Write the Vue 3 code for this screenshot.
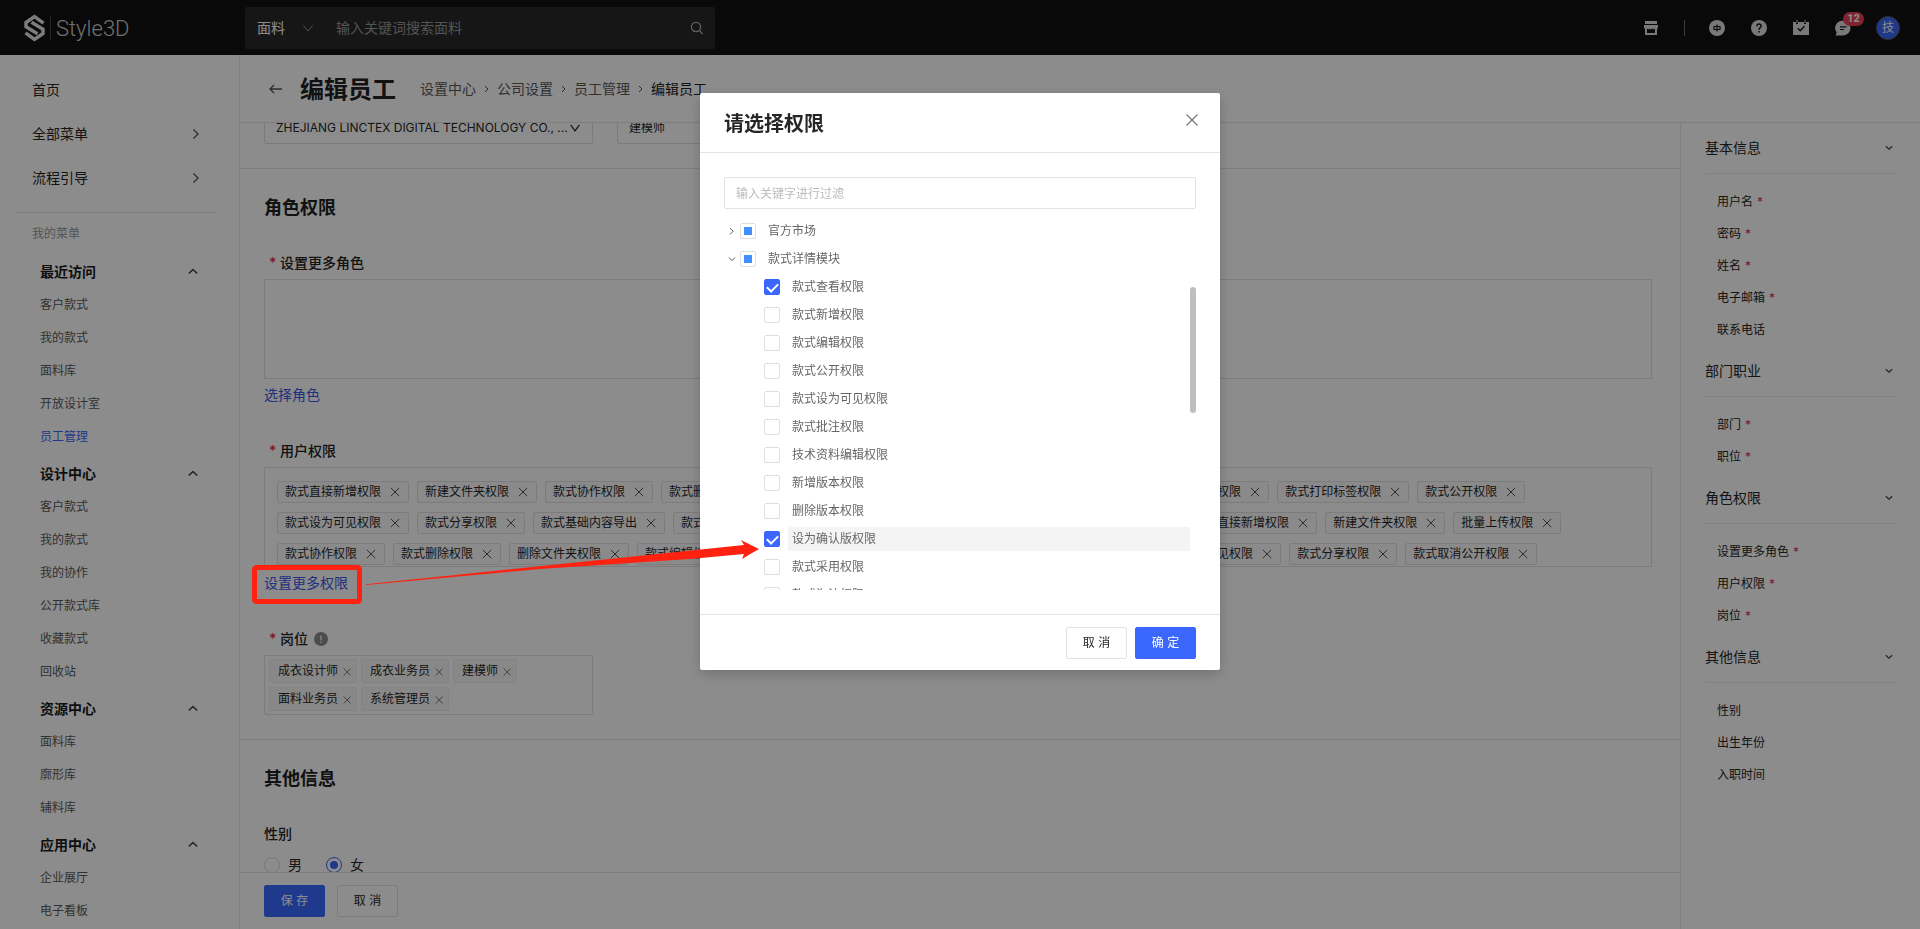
<script setup>
import { ref } from 'vue'

const keyword = ref('')
const filter = ref('')
const gender = ref('女')

const menuGroups = [
  { title: '最近访问', items: ['客户款式', '我的款式', '面料库', '开放设计室', '员工管理'], active: 4 },
  { title: '设计中心', items: ['客户款式', '我的款式', '我的协作', '公开款式库', '收藏款式', '回收站'] },
  { title: '资源中心', items: ['面料库', '廓形库', '辅料库'] },
  { title: '应用中心', items: ['企业展厅', '电子看板'] },
]

const crumbs = ['设置中心', '公司设置', '员工管理', '编辑员工']

const userTags = [
  '款式直接新增权限', '新建文件夹权限', '款式协作权限', '款式删除权限', '删除文件夹权限', '款式编辑权限',
  '款式导出权限', '款式批量上传权限', '款式打印标签权限', '款式公开权限',
  '款式设为可见权限', '款式分享权限', '款式基础内容导出', '款式打印权限', '款式批量导出权限', '款式采用权限',
  '款式取消采用权限', '款式直接新增权限', '新建文件夹权限', '批量上传权限',
  '款式协作权限', '款式删除权限', '删除文件夹权限', '款式编辑权限', '款式导出权限', '款式打印标签权限',
  '款式取消分享权限', '款式设为可见权限', '款式分享权限', '款式取消公开权限',
]

const posts = ['成衣设计师', '成衣业务员', '建模师', '面料业务员', '系统管理员']

const anchors = [
  { title: '基本信息', items: [['用户名', true], ['密码', true], ['姓名', true], ['电子邮箱', true], ['联系电话', false]] },
  { title: '部门职业', items: [['部门', true], ['职位', true]] },
  { title: '角色权限', items: [['设置更多角色', true], ['用户权限', true], ['岗位', true]] },
  { title: '其他信息', items: [['性别', false], ['出生年份', false], ['入职时间', false]] },
]

const tree = ref([
  { label: '款式查看权限', checked: true },
  { label: '款式新增权限', checked: false },
  { label: '款式编辑权限', checked: false },
  { label: '款式公开权限', checked: false },
  { label: '款式设为可见权限', checked: false },
  { label: '款式批注权限', checked: false },
  { label: '技术资料编辑权限', checked: false },
  { label: '新增版本权限', checked: false },
  { label: '删除版本权限', checked: false },
  { label: '设为确认版权限', checked: true, hover: true },
  { label: '款式采用权限', checked: false },
  { label: '款式淘汰权限', checked: false },
])
</script>

<template>
  <div class="page">
    <header class="topbar">
      <a class="logo" href="#" aria-label="Style3D">
        <svg width="21" height="28" viewBox="0 0 21 28" fill="none" stroke="#e4e4e4" stroke-width="3.400">
          <path d="M19.500 9.200 10.500 2.600 2 8.500v4.200l11.500 7" />
          <path d="M1.500 18.800l9 6.600L19 19.500v-4.200l-11.500-7" />
        </svg>
        <span class="logo-line"></span>
        <span class="logo-text">Style3D</span>
      </a>
      <div class="search">
        <div class="search-type">
          <select aria-label="搜索类型"><option>面料</option></select>
          <svg width="10" height="7" viewBox="0 0 10 7" fill="none" stroke="#999"><path d="M.5.5 5 6 9.500.5" /></svg>
        </div>
        <input v-model="keyword" type="text" placeholder="输入关键词搜索面料" aria-label="搜索" />
        <button class="icon-btn" aria-label="搜索">
          <svg width="14" height="14" viewBox="0 0 14 14" fill="none" stroke="#b0b0b0" stroke-width="1.300"><circle cx="7" cy="6" r="4.600" /><path d="m10.300 9.300 3.200 3.700" /></svg>
        </button>
      </div>
      <nav class="tools">
        <button class="icon-btn" aria-label="商店">
          <svg width="16" height="16" viewBox="0 0 16 16" fill="#dcdcdc"><path d="M3 1h12v3H3zM2 5h14v2.500L15 9v6H3V9L2 7.500zM5 8.500V13h8V8.500l-1.300 1-1.400-1-1.300 1-1.300-1-1.400 1z" fill-rule="evenodd" /></svg>
        </button>
        <span class="tool-line"></span>
        <button class="icon-btn" aria-label="语言">
          <svg width="16" height="16" viewBox="0 0 16 16"><circle cx="8" cy="8" r="8" fill="#dcdcdc" /><path d="M5 6.500h6v3H5zM8 4.500v7" fill="none" stroke="#121212" stroke-width="1.200" /></svg>
        </button>
        <button class="icon-btn" aria-label="帮助">
          <svg width="16" height="16" viewBox="0 0 16 16"><circle cx="8" cy="8" r="8" fill="#dcdcdc" /><path d="M5.800 6.200c0-3 4.500-2.800 4.400-.1C10.200 7.600 8 7.800 8 9.700M8 11v1.500" fill="none" stroke="#121212" stroke-width="1.500" /></svg>
        </button>
        <button class="icon-btn" aria-label="日程">
          <svg width="16" height="16" viewBox="0 0 16 16"><path d="M0 2h3v2h2V2h6v2h2V2h3v13H0z" fill="#dcdcdc" /><path d="M4 0v3M12 0v3" stroke="#dcdcdc" /><path d="m4.800 8.300 2.400 2.400 4.200-4.400" fill="none" stroke="#121212" stroke-width="1.500" /></svg>
        </button>
        <button class="icon-btn msg" aria-label="消息">
          <svg width="16" height="16" viewBox="0 0 16 16"><path d="M8.200.8a7.300 7.300 0 1 1 0 14.600H.6l1-3A7.300 7.300 0 0 1 8.200.8z" fill="#dcdcdc" /><path d="M5 6.800h6.500M5 9.500h4" stroke="#121212" stroke-width="1.200" /></svg>
          <span class="badge">12</span>
        </button>
        <button class="avatar">技</button>
      </nav>
    </header>

    <div class="body">
      <aside class="side">
        <a class="side-main" href="#">首页</a>
        <a class="side-main" href="#">全部菜单
          <svg width="8" height="12" viewBox="0 0 8 12" fill="none" stroke="#555" stroke-width="1.300"><path d="m1.500 1.500 4.500 4.500-4.500 4.500" /></svg>
        </a>
        <a class="side-main" href="#">流程引导
          <svg width="8" height="12" viewBox="0 0 8 12" fill="none" stroke="#555" stroke-width="1.300"><path d="m1.500 1.500 4.500 4.500-4.500 4.500" /></svg>
        </a>
        <p class="side-note">我的菜单</p>
        <section v-for="g in menuGroups" :key="g.title" class="side-group">
          <h3>{{ g.title }}
            <svg width="10" height="7" viewBox="0 0 10 7" fill="none" stroke="#444" stroke-width="1.600"><path d="m.8 5.500 4.200-4 4.200 4" /></svg>
          </h3>
          <a v-for="(t, i) in g.items" :key="t" href="#" :class="{ active: g.active === i }">{{ t }}</a>
        </section>
      </aside>

      <div class="work">
        <div class="titlebar">
          <button class="icon-btn" aria-label="返回">
            <svg width="14" height="12" viewBox="0 0 14 12" fill="none" stroke="#555" stroke-width="1.300"><path d="M14 6H2M6 2 2 6l4 4" /></svg>
          </button>
          <h1>编辑员工</h1>
          <nav class="crumbs">
            <template v-for="(c, i) in crumbs" :key="c">
              <svg v-if="i" width="21" height="8" viewBox="0 0 21 8" fill="none" stroke="#555"><path d="m9 1 3 3-3 3" /></svg>
              <a href="#" :class="{ current: i === 3 }">{{ c }}</a>
            </template>
          </nav>
        </div>

        <div class="columns">
          <main class="form-col">
            <div class="scroll">
              <section class="block selects">
                <div class="select-box">
                  <select aria-label="部门"><option>ZHEJIANG LINCTEX DIGITAL TECHNOLOGY CO., ...</option></select>
                  <svg width="10" height="8" viewBox="0 0 10 8" fill="none" stroke="#333" stroke-width="1.300"><path d="m.6.8 4.400 6 4.400-6" /></svg>
                </div>
                <div class="select-box">
                  <select aria-label="职位"><option>建模师</option></select>
                  <svg width="10" height="8" viewBox="0 0 10 8" fill="none" stroke="#333" stroke-width="1.300"><path d="m.6.8 4.400 6 4.400-6" /></svg>
                </div>
              </section>

              <section class="block">
                <h2>角色权限</h2>
                <div class="field">
                  <div class="label"><i>*</i>设置更多角色</div>
                  <div class="box"></div>
                  <a class="link" href="#">选择角色</a>
                </div>
                <div class="field">
                  <div class="label"><i>*</i>用户权限</div>
                  <div class="box tags">
                    <span v-for="(t, i) in userTags" :key="i" class="tag">{{ t }}
                      <button class="icon-btn" :aria-label="'移除' + t">
                        <svg width="10" height="10" viewBox="0 0 10 10" stroke="#555"><path d="m.8.800 8.400 8.400M9.200.8.8 9.200" /></svg>
                      </button>
                    </span>
                  </div>
                  <a class="link" href="#">设置更多权限</a>
                </div>
                <div class="field">
                  <div class="label"><i>*</i>岗位
                    <svg width="14" height="14" viewBox="0 0 14 14"><circle cx="7" cy="7" r="7" fill="#8c8c8c" /><path d="M7 3.500v5M7 9.500V11" stroke="#fff" stroke-width="1.200" /></svg>
                  </div>
                  <div class="posts">
                    <span v-for="p in posts" :key="p" class="post">{{ p }}
                      <button class="icon-btn" :aria-label="'移除' + p">
                        <svg width="8" height="8" viewBox="0 0 8 8" stroke="#777"><path d="m.8.500 6.800 7M7.600.5l-6.800 7" /></svg>
                      </button>
                    </span>
                  </div>
                </div>
              </section>

              <section class="block other">
                <h2>其他信息</h2>
                <div class="label">性别</div>
                <div class="radios">
                  <label v-for="g in ['男', '女']" :key="g"><input v-model="gender" type="radio" name="gender" :value="g" />{{ g }}</label>
                </div>
              </section>
            </div>
            <footer class="form-foot">
              <button class="btn primary">保 存</button>
              <button class="btn">取 消</button>
            </footer>
          </main>

          <aside class="anchors">
            <section v-for="a in anchors" :key="a.title">
              <h4>{{ a.title }}
                <svg width="8" height="6" viewBox="0 0 8 6" fill="none" stroke="#444" stroke-width="1.200"><path d="m.8 1.200 3.200 3 3.200-3" /></svg>
              </h4>
              <a v-for="[t, req] in a.items" :key="t" href="#">{{ t }}<i v-if="req">*</i></a>
            </section>
          </aside>
        </div>
      </div>
    </div>

    <div class="mask">
      <div class="modal" role="dialog" aria-labelledby="dlg-title">
        <div class="modal-head">
          <h2 id="dlg-title">请选择权限</h2>
          <button class="icon-btn" aria-label="关闭">
            <svg width="12" height="12" viewBox="0 0 12 12" stroke="#777" stroke-width="1.200"><path d="m.5.5 11 11M11.500.5l-11 11" /></svg>
          </button>
        </div>
        <div class="modal-body">
          <input v-model="filter" class="filter" type="text" placeholder="输入关键字进行过滤" aria-label="过滤" />
          <div class="tree">
            <div class="node">
              <svg width="12" height="8" viewBox="0 0 12 8" fill="none" stroke="#666"><path d="m6 1 3.200 3.200L6 7.400" /></svg>
              <label><input type="checkbox" :indeterminate.prop="true" /><span>官方市场</span></label>
            </div>
            <div class="node">
              <svg width="12" height="8" viewBox="0 0 12 8" fill="none" stroke="#666"><path d="m4.800 2.500 3.200 3 3.200-3" /></svg>
              <label><input type="checkbox" :indeterminate.prop="true" /><span>款式详情模块</span></label>
            </div>
            <div v-for="n in tree" :key="n.label" class="node child">
              <label><input v-model="n.checked" type="checkbox" /><span :class="{ hover: n.hover }">{{ n.label }}</span></label>
            </div>
            <div class="thumb"></div>
          </div>
        </div>
        <div class="modal-foot">
          <button class="btn">取 消</button>
          <button class="btn primary">确 定</button>
        </div>
      </div>
    </div>

    <svg class="note" width="560" height="80" viewBox="0 0 560 80">
      <rect x="14.500" y="32.500" width="105" height="34" rx="2" fill="none" stroke="#ff2211" stroke-width="5" />
      <path d="M126 49.200 504 10l-3-5 18 9-17 10 2-5-54 5-150 10-174 16z" fill="#ff2211" />
    </svg>
  </div>
</template>

<style>
body {
  margin: 0;
}
</style>

<style scoped>
.page {
  position: relative;
  display: flex;
  flex-direction: column;
  height: 100vh;
  overflow: hidden;
  background: #fff;
  color: #262626;
  font: 12px/20px Inter, "Noto Sans CJK SC", sans-serif;
}
.page * {
  box-sizing: border-box;
}
h1, h2, h3, h4, p {
  margin: 0;
}
a {
  color: inherit;
  text-decoration: none;
}
i {
  font-style: normal;
  color: #e03046;
}
svg {
  flex: none;
  display: block;
}
input, select, button {
  margin: 0;
  padding: 0;
  border: 0;
  background: none;
  font: inherit;
  color: inherit;
  outline: none;
}
select {
  appearance: none;
}
.icon-btn {
  display: flex;
  flex: none;
}

.topbar {
  display: flex;
  align-items: center;
  flex: none;
  height: 55px;
  padding: 0 20px 0 24px;
  background: #121212;
  color: #fff;
}
.logo {
  display: flex;
  align-items: center;
  width: 221px;
}
.logo-line {
  width: 1px;
  height: 24px;
  margin: 0 5px;
  background: #444;
}
.logo-text {
  padding-top: 2px;
  font: 300 22px/28px Roboto, sans-serif;
  color: #ccc;
}
.search {
  display: flex;
  align-items: center;
  width: 470px;
  height: 42px;
  padding: 0 12px;
  background: #282828;
  border-radius: 2px;
  font-size: 14px;
}
.search-type {
  position: relative;
  width: 79px;
}
.search-type select {
  width: 58px;
}
.search-type svg {
  position: absolute;
  right: 23px;
  top: 7px;
  pointer-events: none;
}
.search input {
  flex: 1;
  min-width: 0;
}
.search input::placeholder {
  color: #999;
}
.tools {
  display: flex;
  align-items: center;
  gap: 26px;
  margin-left: auto;
}
.tool-line {
  width: 1px;
  height: 16px;
  margin-right: -2px;
  background: #666;
}
.msg {
  position: relative;
}
.badge {
  position: absolute;
  left: 8px;
  top: -8px;
  width: 21px;
  height: 14px;
  border-radius: 7px;
  background: #e84356;
  color: #fff;
  font: bold 11px/14px Roboto, sans-serif;
  text-align: center;
}
.avatar {
  width: 24px;
  height: 24px;
  margin-left: -1px;
  border: 1px solid #555;
  border-radius: 50%;
  background: #3a68f8;
  font-size: 12px;
  line-height: 22px;
}

.body {
  display: flex;
  flex: 1;
  min-height: 0;
}
.side {
  flex: none;
  width: 240px;
  padding: 13px 22px 0 16px;
  border-right: 1px solid #e8e8e8;
  overflow: hidden;
}
.side-main {
  display: flex;
  align-items: center;
  justify-content: space-between;
  height: 44px;
  padding: 0 17px 0 16px;
  font-size: 14px;
}
.side-note {
  margin-top: 12px;
  padding: 11px 16px 7px;
  border-top: 1px solid #e8e8e8;
  color: #999;
}
.side-group {
  padding: 4px 19px 0 24px;
}
.side-group h3 {
  display: flex;
  align-items: center;
  justify-content: space-between;
  height: 33px;
  font-size: 14px;
  font-weight: 700;
  color: #1a1a1a;
}
.side-group a {
  display: block;
  line-height: 33px;
  color: #595959;
}
.side-group a.active {
  color: #3a68f8;
}

.work {
  display: flex;
  flex-direction: column;
  flex: 1;
  min-width: 0;
}
.titlebar {
  display: flex;
  align-items: center;
  flex: none;
  height: 68px;
  padding: 0 28px;
  border-bottom: 1px solid #e5e5e5;
}
.titlebar h1 {
  margin: 0 24px 0 18px;
  padding-top: 2px;
  font-size: 24px;
  line-height: 32px;
  color: #222;
}
.crumbs {
  display: flex;
  align-items: center;
  padding-top: 1px;
  font-size: 14px;
  color: #595959;
}
.crumbs .current {
  color: #222;
}
.columns {
  display: flex;
  flex: 1;
  min-height: 0;
}
.form-col {
  display: flex;
  flex-direction: column;
  flex: 1;
  min-width: 0;
}
.scroll {
  flex: 1;
  min-height: 0;
  overflow: hidden;
}
.block {
  padding: 25px 28px 24px 24px;
  border-bottom: 1px solid #e5e5e5;
}
.block h2 {
  margin-bottom: 27px;
  font-size: 18px;
  line-height: 28px;
  color: #222;
}
.block.selects {
  display: flex;
  gap: 24px;
  margin-top: -11px;
  padding-top: 0;
}
.select-box {
  position: relative;
  width: 329px;
}
.select-box select {
  width: 100%;
  height: 32px;
  padding: 0 11px;
  border: 1px solid #e0e0e0;
  border-radius: 2px;
}
.select-box svg {
  position: absolute;
  right: 13px;
  top: 12px;
  pointer-events: none;
}
.label {
  display: flex;
  align-items: center;
  height: 28px;
  font-size: 14px;
  font-weight: 500;
  color: #222;
}
.label i {
  width: 16px;
  padding-left: 5px;
}
.label svg {
  margin-left: 6px;
}
.field + .field {
  margin-top: 30px;
}
.field .label {
  margin-bottom: 2px;
}
.box {
  height: 100px;
  border: 1px solid #e2e2e2;
}
.tags {
  display: flex;
  flex-wrap: wrap;
  align-content: flex-start;
  gap: 9px 8px;
  padding: 13px 12px 0;
}
.tag {
  display: flex;
  align-items: center;
  height: 22px;
  padding: 0 8px 0 7px;
  border: 1px solid #e2e2e2;
  border-radius: 2px;
  background: #fcfcfc;
}
.tag .icon-btn {
  margin-left: 9px;
}
.link {
  display: block;
  width: max-content;
  margin-top: 4px;
  font-size: 14px;
  line-height: 24px;
  color: #3a58e8;
}
.posts {
  display: flex;
  flex-wrap: wrap;
  gap: 4px;
  width: 329px;
  padding: 3px 4px;
  border: 1px solid #e2e2e2;
  border-radius: 2px;
}
.post {
  display: flex;
  align-items: center;
  height: 24px;
  padding: 0 5px 0 8px;
  border: 1px solid #efefef;
  border-radius: 2px;
  background: #f7f7f7;
}
.post .icon-btn {
  margin-left: 5px;
  padding-top: 2px;
}
.block.other {
  border-bottom: 0;
}
.radios {
  display: flex;
  gap: 24px;
  margin-top: 5px;
  font-size: 14px;
}
.radios label {
  display: flex;
  align-items: center;
  gap: 8px;
  height: 24px;
}
.radios input {
  display: grid;
  place-items: center;
  appearance: none;
  width: 16px;
  height: 16px;
  border: 1px solid #d9d9d9;
  border-radius: 50%;
}
.radios input:checked {
  border-color: #3a68f8;
}
.radios input:checked::after {
  content: "";
  width: 8px;
  height: 8px;
  border-radius: 50%;
  background: #3a68f8;
}
.form-foot {
  display: flex;
  gap: 12px;
  flex: none;
  padding: 12px 24px;
  border-top: 1px solid #e5e5e5;
}
.btn {
  width: 61px;
  height: 32px;
  border: 1px solid #e2e2e2;
  border-radius: 2px;
  background: #fff;
}
.btn.primary {
  border-color: #3a68ff;
  background: #3a68ff;
  color: #fff;
}

.anchors {
  flex: none;
  width: 240px;
  padding: 0 24px;
  border-left: 1px solid #e5e5e5;
  overflow: hidden;
}
.anchors h4 {
  display: flex;
  align-items: center;
  justify-content: space-between;
  height: 51px;
  margin-bottom: 12px;
  padding-right: 3px;
  border-bottom: 1px solid #ebebeb;
  font-size: 14px;
  font-weight: 400;
}
.anchors a {
  display: block;
  padding-left: 12px;
  line-height: 32px;
}
.anchors i {
  margin-left: 4px;
}

.mask {
  position: fixed;
  inset: 0;
  display: flex;
  justify-content: center;
  align-items: flex-start;
  padding-top: 93px;
  background: rgba(0, 0, 0, 0.45);
}
.modal {
  width: 520px;
  border-radius: 2px;
  background: #fff;
  box-shadow: 0 4px 14px rgba(0, 0, 0, 0.2);
}
.modal-head {
  display: flex;
  justify-content: space-between;
  padding: 16px 22px 13px 24px;
  border-bottom: 1px solid #e5e5e5;
}
.modal-head h2 {
  font-size: 20px;
  line-height: 30px;
}
.modal-head .icon-btn {
  padding-top: 5px;
}
.modal-body {
  padding: 24px;
}
.filter {
  display: block;
  width: 100%;
  height: 32px;
  padding: 0 11px;
  border: 1px solid #e2e2e2;
  border-radius: 2px;
}
.filter::placeholder {
  color: #bbb;
}
.tree {
  position: relative;
  height: 381px;
  padding: 10px 6px 0 0;
  overflow: hidden;
  color: #666;
}
.node {
  display: flex;
  align-items: center;
  gap: 4px;
  height: 24px;
  margin-bottom: 4px;
}
.child {
  padding-left: 40px;
}
.node label {
  display: flex;
  align-items: center;
  gap: 8px;
  flex: 1;
}
.node span {
  flex: 1;
  padding: 0 4px;
  border-radius: 2px;
  line-height: 24px;
}
.node .hover {
  background: #f4f4f4;
}
.node input {
  display: grid;
  place-items: center;
  appearance: none;
  width: 16px;
  height: 16px;
  border: 1px solid #dedede;
  border-radius: 2px;
}
.node input:indeterminate::after {
  content: "";
  width: 8px;
  height: 8px;
  background: #448fff;
}
.node input:checked {
  border-color: #3a68ff;
  background: #3a68ff;
}
.node input:checked::after {
  content: "";
  width: 9px;
  height: 5px;
  margin-bottom: 2px;
  border: solid #fff;
  border-width: 0 0 2px 2px;
  transform: rotate(-45deg);
}
.thumb {
  position: absolute;
  right: 0;
  top: 78px;
  width: 6px;
  height: 126px;
  border-radius: 3px;
  background: #bfbfbf;
}
.modal-foot {
  display: flex;
  justify-content: flex-end;
  gap: 8px;
  padding: 12px 24px 11px;
  border-top: 1px solid #e5e5e5;
}

.note {
  position: absolute;
  left: 240px;
  top: 535px;
  pointer-events: none;
}
</style>
